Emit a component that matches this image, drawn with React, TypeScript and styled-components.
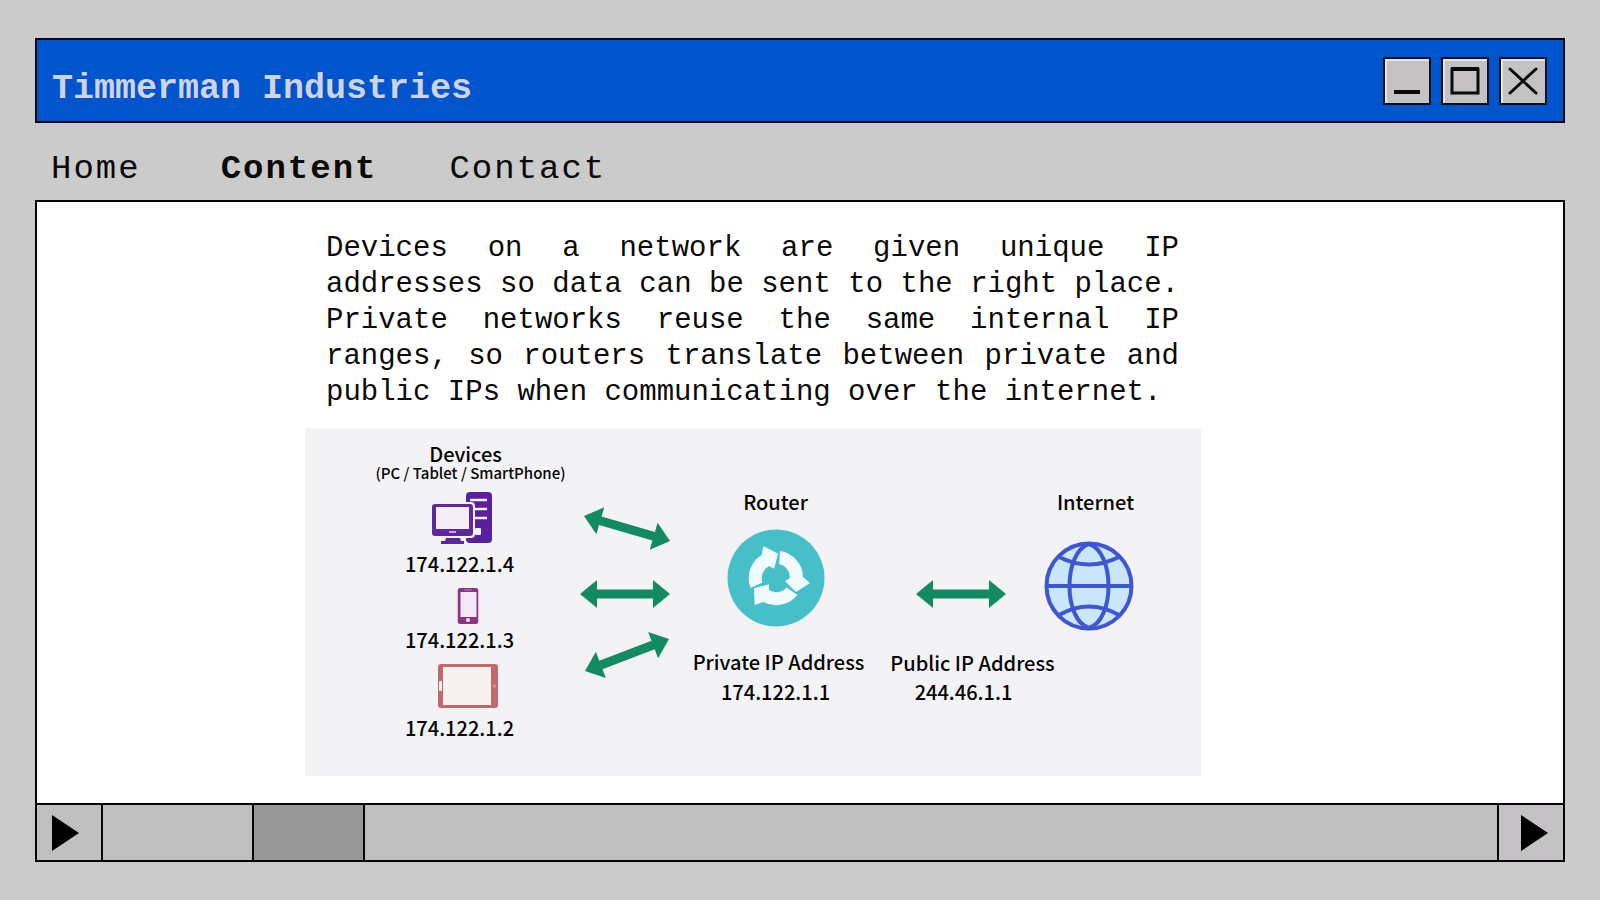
import React from "react";
import styled, { createGlobalStyle } from "styled-components";

const GlobalStyle = createGlobalStyle`
  *, *::before, *::after { box-sizing: border-box; }
  body {
    margin: 0;
    background: #cbcbcb;
    color: #0a0a0a;
    font-family: "Liberation Mono", "Courier New", monospace;
  }
`;

const Page = styled.div`
  display: flex;
  flex-direction: column;
  min-height: 100vh;
  padding: 38px 35px;
`;

const TitleBar = styled.header`
  display: flex;
  align-items: center;
  justify-content: space-between;
  height: 85px;
  padding: 0 16px 0 15px;
  border: 2px solid #05070f;
  background: #0055cc;
`;

const Title = styled.h1`
  margin: 16px 0 0;
  font-size: 35px;
  line-height: 40px;
  font-weight: 700;
  color: #cfd3e2;
`;

const Controls = styled.div`
  display: flex;
  gap: 10px;
`;

const ControlButton = styled.button`
  display: grid;
  place-items: center;
  width: 48px;
  height: 48px;
  padding: 0;
  border: 2px solid #0a1020;
  background: #c4c2c2;
  box-shadow: inset 2px 2px 0 #e6e6e6;
`;

const Nav = styled.nav`
  display: flex;
  height: 77px;
  padding: 26px 0 0 16px;
  gap: 80px;
`;

const NavLink = styled.a<{ $active?: boolean }>`
  font-size: 34px;
  line-height: 40px;
  letter-spacing: 2px;
  font-weight: ${(p) => (p.$active ? 700 : 400)};
  color: #0a0a0a;
  text-decoration: none;

  & + & + & {
    margin-left: -8px;
  }
`;

const Frame = styled.main`
  display: flex;
  flex: 1;
  flex-direction: column;
  border: 2px solid #050505;
  background: #ffffff;
`;

const Content = styled.div`
  display: flex;
  flex: 1;
  flex-direction: column;
  align-items: center;
  gap: 17px;
  padding: 29px 95px 25px 0;
`;

const Paragraph = styled.p`
  width: 853px;
  margin: 0;
  font-size: 29px;
  line-height: 36px;
  text-align: justify;
`;

const Diagram = styled.figure`
  position: relative;
  width: 896px;
  height: 348px;
  margin: 0;
  background: #f3f2f5;
`;

const Links = styled.svg`
  position: absolute;
  inset: 0;
`;

const Node = styled.div<{ $x: number; $y: number }>`
  position: absolute;
  left: ${(p) => p.$x}px;
  top: ${(p) => p.$y}px;
  transform: translate(-50%, -50%);
  display: flex;
`;

const Label = styled.span<{ $small?: boolean }>`
  font-family: "Noto Sans CJK JP", "Noto Sans", sans-serif;
  font-size: ${(p) => (p.$small ? 15 : 20)}px;
  line-height: ${(p) => (p.$small ? 16 : 20)}px;
  font-weight: 500;
  white-space: nowrap;
  color: #050505;
`;

const ScrollBar = styled.div`
  display: flex;
  height: 57px;
  border-top: 2px solid #050505;
  background: #bfbfbf;
`;

const ScrollButton = styled.button<{ $end?: boolean }>`
  display: flex;
  align-items: center;
  justify-content: ${(p) => (p.$end ? "flex-end" : "flex-start")};
  width: 66px;
  padding: 0 15px;
  border: 0 solid #050505;
  border-width: ${(p) => (p.$end ? "0 0 0 2px" : "0 2px 0 0")};
  background: ${(p) => (p.$end ? "#c4c2c4" : "#c0c0c0")};
`;

const Track = styled.div`
  display: flex;
  flex: 1;
  padding-left: 149px;
`;

const Thumb = styled.div`
  width: 113px;
  border: 0 solid #050505;
  border-width: 0 2px;
  background: #989898;
`;

const Triangle = () => (
  <svg width="27" height="36" viewBox="0 0 27 36" aria-hidden="true">
    <path d="M0 0 L27 18 L0 36 Z" fill="#000" />
  </svg>
);

type ArrowProps = { x1: number; y1: number; x2: number; y2: number };

const Arrow = ({ x1, y1, x2, y2 }: ArrowProps) => {
  const length = Math.hypot(x2 - x1, y2 - y1);
  const angle = (Math.atan2(y2 - y1, x2 - x1) * 180) / Math.PI;
  const e = length - 17;
  return (
    <path
      transform={`translate(${x1} ${y1}) rotate(${angle})`}
      d={`M0 0 L17 -14 V-4.5 H${e} V-14 L${length} 0 L${e} 14 V4.5 H17 V14 Z`}
      fill="#128a62"
    />
  );
};

const arrows: ArrowProps[] = [
  { x1: 279, y1: 88, x2: 365, y2: 113 },
  { x1: 275, y1: 166, x2: 365, y2: 166 },
  { x1: 280, y1: 243, x2: 364, y2: 211 },
  { x1: 611, y1: 166, x2: 701, y2: 166 },
];

const labels: { x: number; y: number; text: string; small?: boolean }[] = [
  { x: 161, y: 26, text: "Devices" },
  { x: 166, y: 45, text: "(PC / Tablet / SmartPhone)", small: true },
  { x: 155, y: 136, text: "174.122.1.4" },
  { x: 155, y: 212, text: "174.122.1.3" },
  { x: 155, y: 300, text: "174.122.1.2" },
  { x: 471, y: 74, text: "Router" },
  { x: 474, y: 234, text: "Private IP Address" },
  { x: 471, y: 264, text: "174.122.1.1" },
  { x: 791, y: 74, text: "Internet" },
  { x: 668, y: 235, text: "Public IP Address" },
  { x: 659, y: 264, text: "244.46.1.1" },
];

const ComputerIcon = () => (
  <svg width="60" height="52" viewBox="0 0 60 52" aria-hidden="true">
    <rect x="34" y="0" width="26" height="51" rx="4" fill="#5a1f9e" />
    <path d="M38 8 H55 M38 17 H55 M38 26 H55" stroke="#f3f2f5" strokeWidth="2.5" />
    <rect x="43" y="36" width="6" height="7" rx="1" fill="#f3f2f5" />
    <rect x="-2" y="10" width="45" height="36" rx="4" fill="#f3f2f5" />
    <rect x="0" y="12" width="41" height="32" rx="3" fill="#5f279f" />
    <rect x="4" y="15" width="33" height="22" fill="#f4edf6" />
    <rect x="17" y="39" width="7" height="2" fill="#c9a9e0" />
    <path d="M14 46 H28 L29 49 H32 V52 H9 V49 H13 Z" fill="#5f279f" />
  </svg>
);

const PhoneIcon = () => (
  <svg width="21" height="36" viewBox="0 0 21 36" aria-hidden="true">
    <rect width="21" height="36" rx="3" fill="#8d3383" />
    <rect x="3" y="4" width="16" height="25" fill="#f4e8f6" />
    <path d="M7 2 H14" stroke="#c48abd" />
    <circle cx="10.500" cy="32" r="2" fill="#f7e8f5" />
  </svg>
);

const TabletIcon = () => (
  <svg width="60" height="44" viewBox="0 0 60 44" aria-hidden="true">
    <rect width="60" height="44" rx="3" fill="#c4696b" />
    <rect x="5" y="3" width="48" height="38" fill="#f7f1ef" />
    <rect x="1" y="17" width="3" height="10" rx="1" fill="#f9eeee" />
    <circle cx="56.500" cy="22" r="1.500" fill="#dc9a9a" />
  </svg>
);

const RouterIcon = () => (
  <svg width="98" height="98" viewBox="-49 -49 98 98" aria-hidden="true">
    <circle r="48.500" fill="#46bfc8" />
    {[0, 120, 240].map((turn) => (
      <path
        key={turn}
        transform={`rotate(${turn})`}
        d="M4 -27 A27 27 0 0 1 27 -1 L34 5 L20 14 L9 3 L14 0 A14 14 0 0 0 3 -14 Z"
        fill="#f1fbfd"
      />
    ))}
  </svg>
);

const GlobeIcon = () => (
  <svg
    width="90"
    height="90"
    viewBox="-45 -45 90 90"
    fill="none"
    stroke="#3f55d2"
    strokeWidth="4"
    aria-hidden="true"
  >
    <circle r="42.500" fill="#c9e6fa" />
    <path d="M0 -42 C-26 -34 -26 34 0 42 C26 34 26 -34 0 -42 Z" />
    <path d="M-43 0 H43 M-30 -29 Q0 -14 30 -29 M-30 29 Q0 12 30 29" />
  </svg>
);

const icons = [
  { x: 157, y: 90, Icon: ComputerIcon },
  { x: 163, y: 178, Icon: PhoneIcon },
  { x: 163, y: 258, Icon: TabletIcon },
  { x: 471, y: 150, Icon: RouterIcon },
  { x: 784, y: 158, Icon: GlobeIcon },
];

export default function App() {
  return (
    <>
      <GlobalStyle />
      <Page>
        <TitleBar>
          <Title>Timmerman Industries</Title>
          <Controls>
            <ControlButton type="button" aria-label="Minimize">
              <svg width="44" height="44" stroke="#0a0a0a" fill="none">
                <path d="M9 33 H35" strokeWidth="4" />
              </svg>
            </ControlButton>
            <ControlButton type="button" aria-label="Maximize">
              <svg width="44" height="44" stroke="#0a0a0a" fill="none">
                <path d="M9 9 V34 H35 V9" strokeWidth="3" />
                <path d="M8 10 H36" strokeWidth="4" />
              </svg>
            </ControlButton>
            <ControlButton type="button" aria-label="Close">
              <svg width="44" height="44" stroke="#0a0a0a" fill="none">
                <path d="M9 10 L35 34 M35 10 L9 34" strokeWidth="3" strokeLinecap="round" />
              </svg>
            </ControlButton>
          </Controls>
        </TitleBar>
        <Nav aria-label="Main">
          <NavLink href="#home">Home</NavLink>
          <NavLink href="#content" $active aria-current="page">
            Content
          </NavLink>
          <NavLink href="#contact">Contact</NavLink>
        </Nav>
        <Frame>
          <Content>
            <Paragraph>
              Devices on a network are given unique IP addresses so data can be sent to the right
              place. Private networks reuse the same internal IP ranges, so routers translate
              between private and public IPs when communicating over the internet.
            </Paragraph>
            <Diagram aria-label="Devices, router and internet">
              <Links width="896" height="348" aria-hidden="true">
                {arrows.map((a) => (
                  <Arrow key={`${a.x1}-${a.y1}`} {...a} />
                ))}
              </Links>
              {icons.map(({ x, y, Icon }) => (
                <Node key={`${x}-${y}`} $x={x} $y={y}>
                  <Icon />
                </Node>
              ))}
              {labels.map((l) => (
                <Node key={l.text} $x={l.x} $y={l.y}>
                  <Label $small={l.small}>{l.text}</Label>
                </Node>
              ))}
            </Diagram>
          </Content>
          <ScrollBar>
            <ScrollButton type="button" aria-label="Scroll back">
              <Triangle />
            </ScrollButton>
            <Track>
              <Thumb />
            </Track>
            <ScrollButton type="button" $end aria-label="Scroll forward">
              <Triangle />
            </ScrollButton>
          </ScrollBar>
        </Frame>
      </Page>
    </>
  );
}
